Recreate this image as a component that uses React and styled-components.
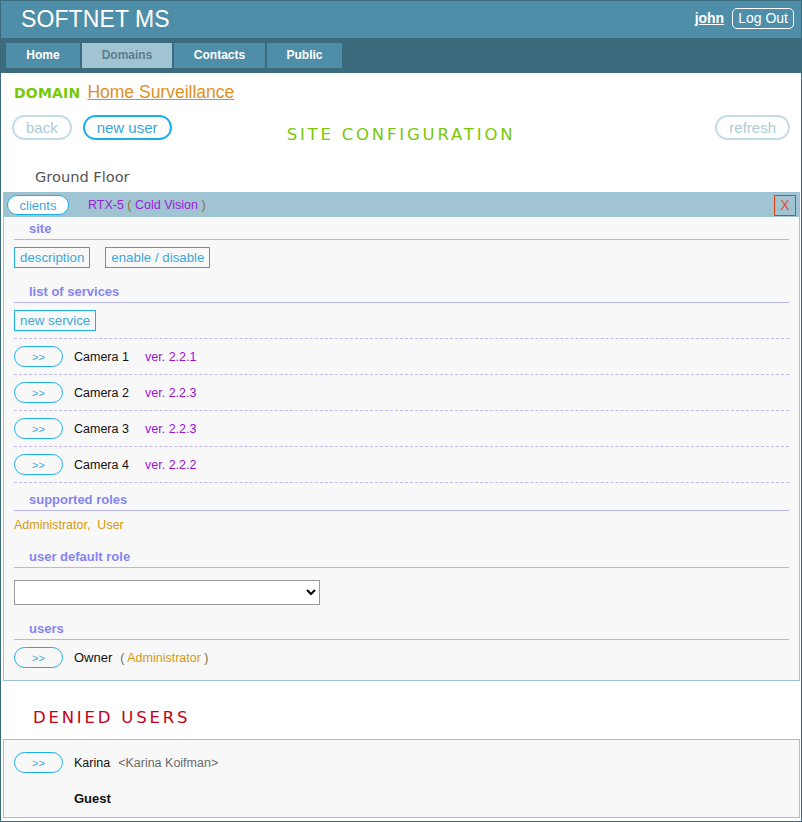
import React from "react";
import styled, { createGlobalStyle } from "styled-components";

const GlobalStyle = createGlobalStyle`
  html, body { margin: 0; padding: 0; background: #fff; }
  body { font-family: "Liberation Sans", Arial, sans-serif; font-size: 13px; color: #000; }
  * { box-sizing: border-box; }
`;

// Frame
const Frame = styled.div`
  min-height: 100vh;
  border: 1px solid #3b6a7c;
  display: flex;
  flex-direction: column;
`;

// Header
const Header = styled.header`
  height: 37px;
  background: #4f8ea8;
  display: flex;
  align-items: center;
  justify-content: space-between;
  padding: 0 7px 0 20px;
`;
const Brand = styled.div`
  font-size: 23px;
  color: #fff;
  letter-spacing: 0.1px;
`;
const UserBox = styled.div`
  display: flex;
  align-items: center;
  gap: 8px;
  margin-top: -3px;
`;
const UserLink = styled.a`
  font-size: 14px;
  font-weight: bold;
  color: #fff;
  text-decoration: underline;
`;
const LogOut = styled.button`
  font-family: inherit;
  font-size: 14px;
  color: #fff;
  background: transparent;
  border: 1px solid #fff;
  border-radius: 5px;
  height: 21px;
  padding: 0 5px;
  line-height: 19px;
`;

// Nav
const Nav = styled.nav`
  height: 35px;
  background: #3d6b7e;
  display: flex;
  align-items: flex-start;
  gap: 2px;
  padding: 5px 0 0 5px;
`;
const Tab = styled.a`
  height: 25px;
  line-height: 25px;
  padding: 0 10px;
  font-size: 12px;
  font-weight: bold;
  color: ${(p) => (p.$active ? "#5a7e8c" : "#fff")};
  background: ${(p) => (p.$active ? "#a1c4d3" : "#4f8ea8")};
  text-align: center;
  min-width: ${(p) => p.$w}px;
`;

// Page body
const Body = styled.main`
  padding: 0 1px 3px 2px;
  display: flex;
  flex-direction: column;
`;
const DomainLine = styled.div`
  display: flex;
  align-items: baseline;
  gap: 7px;
  padding: 9px 0 0 11px;
  height: 35px;
`;
const DomainLabel = styled.span`
  font-family: "DejaVu Sans", Verdana, sans-serif;
  font-weight: bold;
  font-size: 14px;
  color: #78c808;
  letter-spacing: 0.2px;
`;
const DomainLink = styled.a`
  font-size: 17.5px;
  color: #e0901e;
  text-decoration: underline;
`;

const ActionBar = styled.div`
  display: grid;
  grid-template-columns: 1fr auto 1fr;
  align-items: start;
  padding: 7px 10px 0 9px;
  height: 55px;
`;
const ActionGroup = styled.div`
  display: flex;
  gap: 11px;
  justify-content: ${(p) => (p.$right ? "flex-end" : "flex-start")};
`;
const PillButton = styled.button`
  font-family: inherit;
  font-size: 15px;
  height: 25px;
  padding: 0 12px;
  line-height: 21px;
  border-radius: 13px;
  background: #fff;
  color: ${(p) => (p.$dim ? "#aecad6" : "#3aa6d8")};
  border: 2px solid ${(p) => (p.$dim ? "#c2dde8" : "#1cb0ea")};
`;
const PageTitle = styled.h2`
  margin: 0;
  padding-top: ${(p) => p.$pt || 0}px;
  font-family: "DejaVu Sans", Verdana, sans-serif;
  font-weight: normal;
  font-size: 16.5px;
  letter-spacing: 2.8px;
  color: ${(p) => p.$color};
  line-height: 20px;
`;

const FloorTitle = styled.div`
  font-family: "DejaVu Sans", Verdana, sans-serif;
  font-size: 14.6px;
  color: #555;
  padding: 4px 0 0 32px;
  line-height: 20px;
  height: 29px;
`;

// Panels
const Panel = styled.section`
  background: #f8f8f8;
  border: 1px solid #9cc3d3;
  padding: 0 10px ${(p) => p.$pb}px 10px;
`;
const Strip = styled.div`
  margin: 0 -10px;
  height: 24px;
  background: #a1c4d3;
  display: flex;
  align-items: center;
  padding: 0 3px;
`;
const SmallPill = styled.button`
  font-family: inherit;
  font-size: ${(p) => (p.$small ? 11 : 13)}px;
  height: ${(p) => p.$h || 21}px;
  width: ${(p) => p.$w}px;
  padding: 0;
  border-radius: 11px;
  background: ${(p) => (p.$white ? "#fff" : "transparent")};
  color: #40a8d8;
  border: 1px solid #1cb0ea;
  flex-shrink: 0;
`;
const StripText = styled.span`
  margin-left: 19px;
  font-size: 12.5px;
  color: #8b6f3a;
`;
const Purple = styled.span`
  color: #9a22d4;
`;
const CloseBox = styled.button`
  margin-left: auto;
  width: 22px;
  height: 21px;
  padding: 0;
  font-family: inherit;
  font-size: 14px;
  color: #e5502a;
  background: transparent;
  border: 1px solid #e0400c;
`;

const SectionTitle = styled.div`
  margin-top: ${(p) => p.$mt}px;
  padding: 0 0 2px 15px;
  line-height: 16px;
  font-size: 13px;
  font-weight: bold;
  color: #8585f0;
  border-bottom: 1px solid #b6b6ee;
`;
const ButtonRow = styled.div`
  display: flex;
  gap: 15px;
  margin-top: ${(p) => p.$mt}px;
`;
const BoxButton = styled.button`
  font-family: inherit;
  font-size: 13.3px;
  height: 21px;
  padding: 0 5px;
  background: transparent;
  color: #40a8d8;
  border: 1px solid #1cb0ea;
`;

const ServiceList = styled.ul`
  list-style: none;
  margin: 7px 0 0 0;
  padding: 0;
  border-top: 1px dashed #c4b8f4;
`;
const ServiceItem = styled.li`
  display: flex;
  align-items: center;
  padding: 7px 0;
  border-bottom: 1px dashed #c4b8f4;
`;
const ItemRow = styled.div`
  display: flex;
  align-items: center;
  margin-top: ${(p) => p.$mt}px;
`;
const Name = styled.span`
  margin-left: 11px;
  font-size: ${(p) => p.$size || 13}px;
  color: #111;
  min-width: ${(p) => p.$min || 0}px;
`;
const Version = styled.span`
  font-size: 12.5px;
  color: #9a10d4;
`;
const Gold = styled.span`
  color: #d49a10;
`;
const Muted = styled.span`
  font-size: 12.5px;
  color: #7c6c4c;
  margin-left: 8px;
`;
const Gray = styled.span`
  font-size: 12.5px;
  color: #6a6a6a;
  margin-left: 8px;
`;
const Roles = styled.div`
  margin-top: 6px;
  line-height: 16px;
  font-size: 12.5px;
  color: #d49a10;
`;
const Select = styled.select`
  margin-top: 12px;
  width: 306px;
  height: 25px;
  border: 1px solid #9a9a9a;
  background: #fff;
  font-family: inherit;
  font-size: 13px;
  border-radius: 0;
`;
const DeniedWrap = styled.div`
  padding: 27px 0 11px 30px;
`;
const Guest = styled.div`
  margin: 17px 0 0 60px;
  line-height: 17px;
  font-size: 13px;
  font-weight: bold;
  color: #111;
`;

const services = [
  { name: "Camera 1", ver: "2.2.1" },
  { name: "Camera 2", ver: "2.2.3" },
  { name: "Camera 3", ver: "2.2.3" },
  { name: "Camera 4", ver: "2.2.2" },
];

const tabs = [
  { label: "Home", w: 74 },
  { label: "Domains", w: 90, active: true },
  { label: "Contacts", w: 91 },
  { label: "Public", w: 75 },
];

export default function App() {
  return (
    <>
      <GlobalStyle />
      <Frame>
        <Header>
          <Brand>SOFTNET MS</Brand>
          <UserBox>
            <UserLink>john</UserLink>
            <LogOut>Log Out</LogOut>
          </UserBox>
        </Header>
        <Nav>
          {tabs.map((t) => (
            <Tab key={t.label} $w={t.w} $active={t.active}>
              {t.label}
            </Tab>
          ))}
        </Nav>

        <Body>
          <DomainLine>
            <DomainLabel>DOMAIN</DomainLabel>
            <DomainLink>Home Surveillance</DomainLink>
          </DomainLine>

          <ActionBar>
            <ActionGroup>
              <PillButton $dim>back</PillButton>
              <PillButton>new user</PillButton>
            </ActionGroup>
            <PageTitle $color="#78c808" $pt={10}>SITE CONFIGURATION</PageTitle>
            <ActionGroup $right>
              <PillButton $dim>refresh</PillButton>
            </ActionGroup>
          </ActionBar>

          <FloorTitle>Ground Floor</FloorTitle>

          <Panel $pb={12}>
            <Strip>
              <SmallPill $white $w={62} $h={20}>clients</SmallPill>
              <StripText>
                <Purple>RTX-5</Purple> ( <Purple>Cold Vision</Purple> )
              </StripText>
              <CloseBox>X</CloseBox>
            </Strip>

            <SectionTitle $mt={4}>site</SectionTitle>
            <ButtonRow $mt={7}>
              <BoxButton>description</BoxButton>
              <BoxButton>enable / disable</BoxButton>
            </ButtonRow>

            <SectionTitle $mt={16}>list of services</SectionTitle>
            <ButtonRow $mt={7}>
              <BoxButton>new service</BoxButton>
            </ButtonRow>

            <ServiceList>
              {services.map((s) => (
                <ServiceItem key={s.name}>
                  <SmallPill $small $w={49}>&gt;&gt;</SmallPill>
                  <Name $size={12.5} $min={71}>{s.name}</Name>
                  <Version>ver. {s.ver}</Version>
                </ServiceItem>
              ))}
            </ServiceList>

            <SectionTitle $mt={9}>supported roles</SectionTitle>
            <Roles>Administrator,&nbsp; User</Roles>

            <SectionTitle $mt={16}>user default role</SectionTitle>
            <Select />

            <SectionTitle $mt={16}>users</SectionTitle>
            <ItemRow $mt={7}>
              <SmallPill $small $w={49}>&gt;&gt;</SmallPill>
              <Name>Owner</Name>
              <Muted>
                ( <Gold>Administrator</Gold> )
              </Muted>
            </ItemRow>
          </Panel>

          <DeniedWrap>
            <PageTitle $color="#c40014">DENIED USERS</PageTitle>
          </DeniedWrap>

          <Panel $pb={10}>
            <ItemRow $mt={12}>
              <SmallPill $small $w={49}>&gt;&gt;</SmallPill>
              <Name $size={12.5}>Karina</Name>
              <Gray>&lt;Karina Koifman&gt;</Gray>
            </ItemRow>
            <Guest>Guest</Guest>
          </Panel>
        </Body>
      </Frame>
    </>
  );
}
